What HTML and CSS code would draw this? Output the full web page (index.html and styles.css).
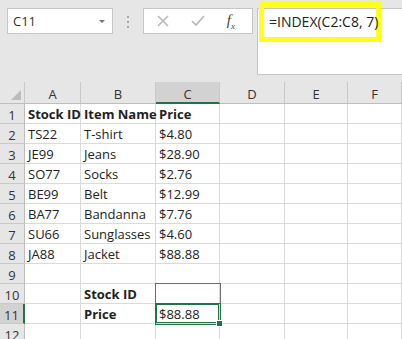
FILE: index.html
```html
<!DOCTYPE html>
<html lang="en">
<head>
    <meta charset="UTF-8">
    <title>INDEX example</title>
    <link rel="stylesheet" href="styles.css">
</head>
<body>
    <div class="toolbar">
        <div class="name-box">
            <span>C11</span>
            <span class="caret"></span>
        </div>
        <div class="grip"><i></i><i></i><i></i></div>
        <div class="fx-buttons">
            <svg width="14" height="14" viewBox="0 0 14 14"><path d="M2 2 L12 12 M12 2 L2 12" stroke="#b8b8b8" stroke-width="1.6" fill="none"/></svg>
            <svg width="16" height="14" viewBox="0 0 16 14"><path d="M2 7 L6 11 L14 2" stroke="#b8b8b8" stroke-width="1.6" fill="none"/></svg>
            <span class="fx">f<sub>x</sub></span>
        </div>
        <div class="formula-bar">
            <div class="highlight">=INDEX(C2:C8, 7)</div>
        </div>
    </div>

    <div class="sheet">
        <div class="hd corner"></div>
        <div class="hd">A</div>
        <div class="hd">B</div>
        <div class="hd sel-col">C</div>
        <div class="hd">D</div>
        <div class="hd">E</div>
        <div class="hd">F</div>

        <div class="rh">1</div><div class="c b">Stock ID</div><div class="c b">Item Name</div><div class="c b">Price</div><div class="c"></div><div class="c"></div><div class="c"></div>
        <div class="rh">2</div><div class="c">TS22</div><div class="c">T-shirt</div><div class="c">$4.80</div><div class="c"></div><div class="c"></div><div class="c"></div>
        <div class="rh">3</div><div class="c">JE99</div><div class="c">Jeans</div><div class="c">$28.90</div><div class="c"></div><div class="c"></div><div class="c"></div>
        <div class="rh">4</div><div class="c">SO77</div><div class="c">Socks</div><div class="c">$2.76</div><div class="c"></div><div class="c"></div><div class="c"></div>
        <div class="rh">5</div><div class="c">BE99</div><div class="c">Belt</div><div class="c">$12.99</div><div class="c"></div><div class="c"></div><div class="c"></div>
        <div class="rh">6</div><div class="c">BA77</div><div class="c">Bandanna</div><div class="c">$7.76</div><div class="c"></div><div class="c"></div><div class="c"></div>
        <div class="rh">7</div><div class="c">SU66</div><div class="c">Sunglasses</div><div class="c">$4.60</div><div class="c"></div><div class="c"></div><div class="c"></div>
        <div class="rh">8</div><div class="c">JA88</div><div class="c">Jacket</div><div class="c">$88.88</div><div class="c"></div><div class="c"></div><div class="c"></div>
        <div class="rh">9</div><div class="c"></div><div class="c"></div><div class="c"></div><div class="c"></div><div class="c"></div><div class="c"></div>
        <div class="rh">10</div><div class="c"></div><div class="c b">Stock ID</div><div class="c boxed"></div><div class="c"></div><div class="c"></div><div class="c"></div>
        <div class="rh sel-row">11</div><div class="c"></div><div class="c b">Price</div><div class="c active">$88.88<span class="handle"></span></div><div class="c"></div><div class="c"></div><div class="c"></div>
        <div class="rh">12</div><div class="c"></div><div class="c"></div><div class="c"></div><div class="c"></div><div class="c"></div><div class="c"></div>
    </div>
</body>
</html>
```

FILE: styles.css
```css
body {
    margin: 0;
    width: 402px;
    height: 339px;
    overflow: hidden;
    background-color: #e6e6e6;
    font-family: "Open Sans", "Noto Sans", sans-serif;
    color: #222;
}

/* formula bar row */
.toolbar {
    position: relative;
    display: flex;
    align-items: flex-start;
    height: 82px;
    padding-top: 8px;
    box-sizing: border-box;
}
.name-box {
    display: flex;
    align-items: center;
    justify-content: space-between;
    width: 106px;
    height: 26px;
    margin-left: 7px;
    padding: 0 7px 0 5px;
    box-sizing: border-box;
    background-color: #fff;
    border: 1px solid #c6c6c6;
    font-size: 13px;
    color: #333;
}
.caret {
    width: 0;
    height: 0;
    border-left: 3px solid transparent;
    border-right: 3px solid transparent;
    border-top: 3px solid #777;
}
.grip {
    display: flex;
    flex-direction: column;
    gap: 3px;
    width: 30px;
    align-items: center;
    padding-top: 8px;
}
.grip i {
    width: 2px;
    height: 2px;
    background-color: #a8a8a8;
}
.fx-buttons {
    display: flex;
    align-items: center;
    justify-content: space-between;
    width: 110px;
    height: 26px;
    padding: 0 17px 0 12px;
    box-sizing: border-box;
    background-color: #fff;
    border: 1px solid #c6c6c6;
}
.fx {
    font-family: "Liberation Serif", serif;
    font-style: italic;
    font-size: 15px;
    color: #444;
}
.fx sub {
    font-size: 9px;
}
.formula-bar {
    position: relative;
    flex: 1;
    height: 65px;
    margin-left: 4px;
    background-color: #fff;
    border: 1px solid #c6c6c6;
    border-right: none;
}
.highlight {
    position: absolute;
    left: 1px;
    top: -7px;
    width: 122px;
    height: 40px;
    box-sizing: border-box;
    border: 5px solid #ffff1a;
    padding: 5px 0 0 5px;
    font-size: 14px;
    color: #222;
    white-space: nowrap;
}

/* sheet grid */
.sheet {
    display: grid;
    grid-template-columns: 25px 56px 75px 64px 65px 63px 1fr;
    grid-template-rows: 22px;
    grid-auto-rows: 20px;
    background-color: #fff;
    font-size: 13px;
}
.hd {
    display: flex;
    align-items: center;
    justify-content: center;
    background-color: #e6e6e6;
    border-right: 1px solid #c8c8c8;
    border-bottom: 1px solid #bdbdbd;
    color: #333;
    font-size: 13px;
    padding-top: 3px;
    box-sizing: border-box;
}
.hd.corner {
    position: relative;
}
.hd.corner::after {
    content: "";
    position: absolute;
    right: 3px;
    bottom: 3px;
    border-left: 10px solid transparent;
    border-bottom: 10px solid #bcbcbc;
}
.hd.sel-col {
    background-color: #d2d2d2;
    border-bottom: 2px solid #217346;
}
.rh {
    display: flex;
    align-items: center;
    justify-content: center;
    padding-top: 2px;
    background-color: #e6e6e6;
    border-right: 1px solid #bdbdbd;
    border-bottom: 1px solid #c8c8c8;
    color: #333;
    box-sizing: border-box;
}
.rh.sel-row {
    background-color: #d2d2d2;
    border-right: 2px solid #217346;
}
.c {
    position: relative;
    display: flex;
    align-items: flex-end;
    padding: 0 0 0 3px;
    border-right: 1px solid #dadada;
    border-bottom: 1px solid #dadada;
    box-sizing: border-box;
    white-space: nowrap;
    line-height: 17px;
}
.c.b {
    font-weight: 700;
}
.c.boxed {
    box-shadow: 0 0 0 1px #6d6d6d;
    z-index: 1;
}
.c.active {
    box-shadow: 0 0 0 1px #217346, inset 0 0 0 1px #217346;
    z-index: 2;
}
.handle {
    position: absolute;
    right: -4px;
    bottom: -4px;
    width: 5px;
    height: 5px;
    background-color: #217346;
    border: 1px solid #fff;
}
```
